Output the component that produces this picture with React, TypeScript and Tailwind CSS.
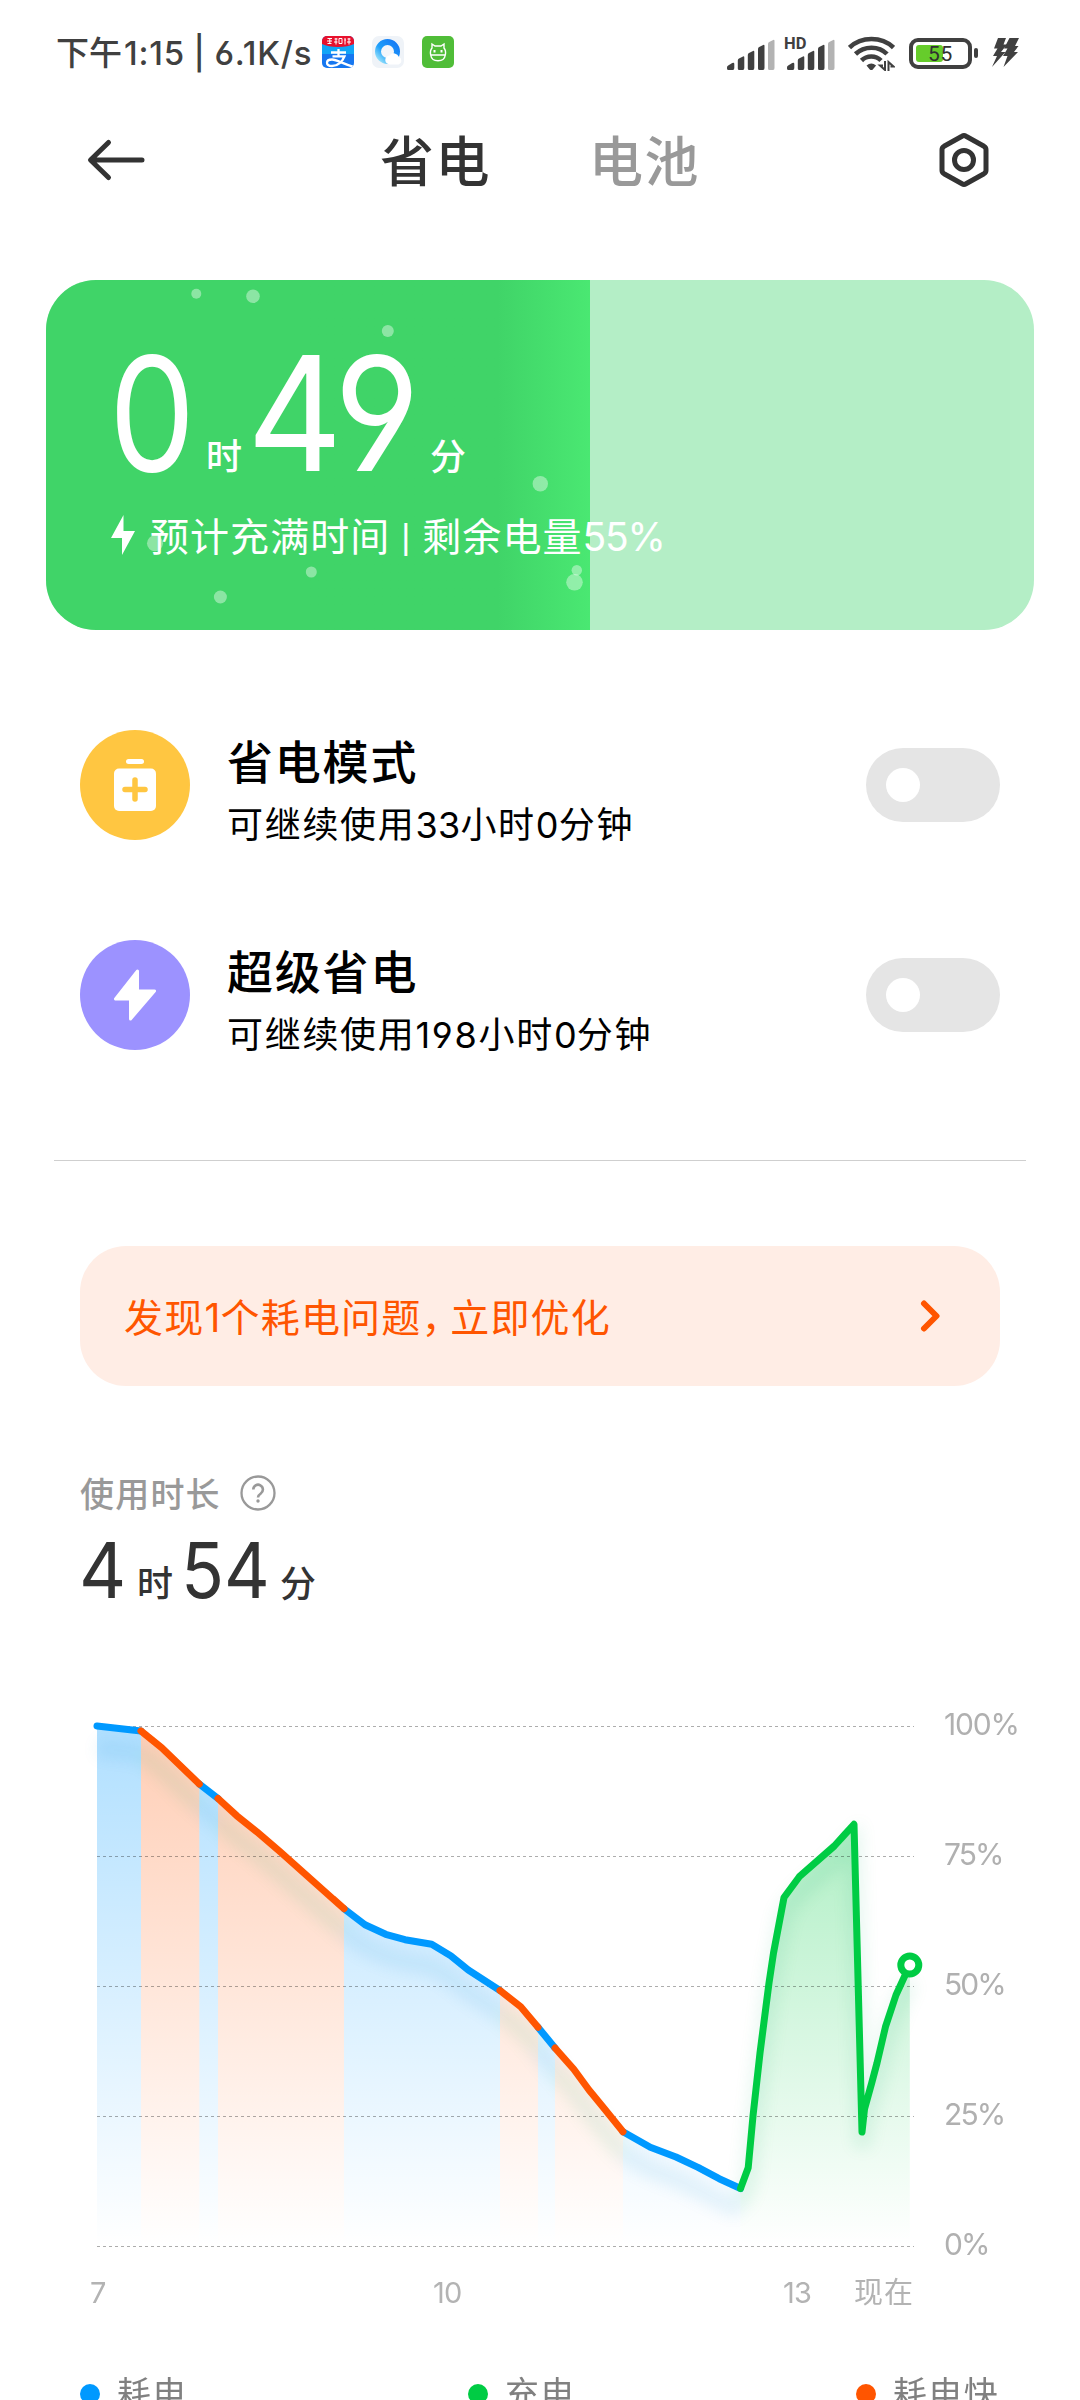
import type { ReactNode } from "react";

type Segment = { color: string; fill: string; points: [number, number][] };

const BLUE = "#0099ff";
const ORANGE = "#ff5500";
const GREEN = "#00cc44";
const BASE = 2246;

const segments: Segment[] = [
  { color: BLUE, fill: "url(#blueFill)", points: [[97, 1726], [141, 1731]] },
  { color: BLUE, fill: "url(#blueFill)", points: [[199.3, 1784], [218, 1798.5]] },
  {
    color: BLUE,
    fill: "url(#blueFill)",
    points: [[344, 1908.7], [365, 1924.7], [385.7, 1934.3], [405, 1939.7], [431.7, 1944.3], [450.7, 1955.7], [468.3, 1970], [500, 1990.5]],
  },
  { color: BLUE, fill: "url(#blueFill)", points: [[538, 2027.3], [555, 2048]] },
  {
    color: BLUE,
    fill: "url(#blueFill)",
    points: [[623, 2131.7], [650.3, 2147.3], [676, 2157], [698, 2167.3], [719.2, 2178.7], [740.5, 2188.5]],
  },
  { color: ORANGE, fill: "url(#orangeFill)", points: [[141, 1731], [161.7, 1747.7], [199.3, 1784]] },
  {
    color: ORANGE,
    fill: "url(#orangeFill)",
    points: [[218, 1798.5], [236.7, 1815.7], [256.7, 1831.7], [280, 1851.7], [344, 1908.7]],
  },
  { color: ORANGE, fill: "url(#orangeFill)", points: [[500, 1990.5], [520.7, 2006.7], [538, 2027.3]] },
  {
    color: ORANGE,
    fill: "url(#orangeFill)",
    points: [[555, 2048], [573.8, 2069.3], [589, 2090], [604.4, 2108.7], [623, 2131.7]],
  },
  {
    color: GREEN,
    fill: "url(#greenFill)",
    points: [
      [740.5, 2188.5], [748.2, 2167.7], [753, 2116], [760, 2053], [769, 1983], [773.5, 1953], [784, 1897.5], [799.3, 1876.7],
      [834.3, 1846], [854, 1824.3], [862, 2132], [864.5, 2109], [871.7, 2083], [877, 2063], [885.5, 2026.7], [896, 1995], [909.8, 1965],
    ],
  },
];

const bubbles = [
  [150.3, 13.7, 5], [207, 16.3, 6.8], [341.8, 51, 6], [494.3, 203.7, 7.7], [109, 263.3, 8],
  [265.3, 292, 5.5], [174.4, 317, 6.5], [528.5, 302.3, 8.3], [530.8, 290.3, 5.2],
];

const toPath = (points: [number, number][]) => points.map(([x, y]) => `${x},${y}`).join(" ");

function SignalBars() {
  return (
    <svg width="48" height="34" viewBox="0 0 48 34" fill="#404040">
      <path d="M0 31.500q0-1.500 1.200-2.100l4-2.300q2.100-1 2.100.8V32q0 2-1.500 2H1.500Q0 34 0 32.500z" />
      <path d="M10.800 24.500q0-1.500 1.200-2l4-2q1.300-.6 1.300 1V32q0 2-1.500 2h-3.500q-1.500 0-1.500-1.500z" />
      <path d="M20.800 19q0-1.500 1.200-2l4-2q1.300-.6 1.300 1v16q0 2-1.500 2h-3.500q-1.500 0-1.500-1.500z" />
      <path d="M31 13q0-1.500 1.200-2l4-2q1.300-.6 1.300 1v22q0 2-1.500 2h-3.500Q31 34 31 32.500z" />
      <path d="M41 8q0-1.500 1.200-2l4-2q1.300-.6 1.300 1v27q0 2-1.500 2h-3.500Q41 34 41 32.500z" fill="#b3b3b3" />
    </svg>
  );
}

/* Latin digits set inside Chinese text */
function Num({ className = "tracking-[0.2px]", children }: { className?: string; children: ReactNode }) {
  return <span className={`font-['Inter'] [font-feature-settings:'cv03','cv04'] ${className}`}>{children}</span>;
}

function StatusBar() {
  return (
    <div className="flex h-[106px] items-center pl-[56px] text-[#404040]">
      <span className="w-[266px] whitespace-nowrap pt-[1px] text-[33px] leading-[40px] font-medium">
        下午<Num className="ml-[2px] tracking-[0.800px] [word-spacing:-1px]">1:15 | 6.1K/s</Num>
      </span>
      <svg className="mt-[-2px]" width="32" height="32" viewBox="0 0 32 32">
        <defs>
          <clipPath id="payClip">
            <rect width="32" height="32" rx="5" />
          </clipPath>
        </defs>
        <g clipPath="url(#payClip)">
          <rect width="32" height="32" fill="#1677f0" />
          <rect y="8" width="32" height="10" fill="#12a5f7" />
          <path d="M0 0h32v8q-6 3-16 3T0 8z" fill="#e8112d" />
          <path
            d="M5.500 2.500h4.500M5 5h5M7.800 2v6M5.500 7.500h4M12.500 3h3M12 6h3.500M14 2v6.500M17 2.500h3v5h-3zM22.500 4h1.500M23 2v6.500M25.500 3h3M25 6h4M27 2v6.500"
            fill="none"
            stroke="#fff"
            strokeWidth="1"
          />
          <path
            d="M9 16.500h15M16.500 13v7M10.500 20.300h12c-2 5-6.500 9.700-12.500 9.700-3 0-5-1.200-5-3.300s2.300-3.200 5-3.200c5 0 11 4.500 22 7.500"
            fill="none"
            stroke="#fff"
            strokeWidth="2.300"
          />
        </g>
      </svg>
      <svg className="ml-[18px] mt-[-2px]" width="32" height="32" viewBox="0 0 32 32">
        <defs>
          <linearGradient id="ringFill" x1="1" y1="0" x2="0" y2="1">
            <stop offset="0" stopColor="#1678f5" />
            <stop offset=".6" stopColor="#1fa0fa" />
            <stop offset="1" stopColor="#9fe6fb" />
          </linearGradient>
        </defs>
        <rect width="32" height="32" rx="7" fill="#eff3f8" />
        <circle cx="15.500" cy="15.500" r="9.500" fill="#f4f6fa" stroke="url(#ringFill)" strokeWidth="6" />
        <path d="M18 28.500a4.500 4.500 0 0 1-.5-9 5.500 5.500 0 0 1 9.500 1.500 4 4 0 0 1-.5 7.500z" fill="#fff" />
      </svg>
      <svg className="ml-[18px] mt-[-2px]" width="32" height="32" viewBox="0 0 32 32" fill="none" stroke="#fff" strokeWidth="1.400">
        <rect width="32" height="32" rx="5" fill="#50bd38" stroke="none" />
        <path d="M10 12V8l3 2h6l3-2v4c1.800 2 1.800 4.500 1.300 7-.5 3.500-3.300 5.800-7.300 5.800s-6.800-2.300-7.300-5.800c-.5-2.500-.5-5 1.300-7zM8.500 19h15" />
        <path d="M12.500 14v2.500M19.500 14v2.500" strokeWidth="2" />
      </svg>

      <div className="ml-[273px] flex items-center">
        <SignalBars />
        <div className="relative ml-[12px] flex">
          <SignalBars />
          <span className="absolute top-[0px] left-[-3px] text-[16.500px] leading-[16px] font-bold">HD</span>
        </div>
        <svg className="ml-[13px]" width="47" height="36" viewBox="0 0 47 36" fill="none" stroke="#404040" strokeWidth="4.600">
          <path d="M1.500 12.500Q10.500 4 23.500 4t22 8.500" />
          <path d="M7.500 19Q14 12.700 23.500 12.700T39 19" />
          <path d="M13.500 25.500q4-4 9.800-4t9.700 4" />
          <path d="M18.500 30.500q4.800-4 9.600 0l-3.300 4q-1.500 1.200-3 0z" fill="#404040" stroke="none" />
          <path d="M37 26v9l-5-4.500h3M40.500 36v-9l5 4.500h-3" strokeWidth="2" />
        </svg>
        <div className="ml-[14px] flex items-center">
          <div className="relative flex h-[31px] w-[63px] items-center rounded-[9px] border-[4px] border-[#404040] pl-[3px]">
            <div className="h-[17px] w-[27px] rounded-[3px] bg-[#66cc2b]" />
            <span className="absolute top-[2px] left-[15px] font-['Roboto'] text-[21px] leading-[20px] tracking-[0.6px] text-[#303030]">
              55
            </span>
          </div>
          <div className="ml-[2px] h-[10px] w-[4px] rounded-[2px] bg-[#404040]" />
        </div>
        <svg className="ml-[14px]" width="28" height="30" viewBox="0 0 28 30" fill="#404040">
          <path d="M6 0h8l-2.500 6.500h3.500L9 14h4.500L0 29l5-11H1l4.500-7.500H2z" />
          <path d="M17.500 0H27l-4 8h3.500L22 14h4L11.500 29l4-11h-4.500l4.500-7.500H12z" />
        </svg>
      </div>
    </div>
  );
}

function Header() {
  return (
    <div className="flex h-[108px] items-center">
      <svg className="ml-[86px]" width="60" height="44" viewBox="0 0 60 44" fill="none" stroke="#333" strokeWidth="5" strokeLinecap="round" strokeLinejoin="round">
        <path d="M56 22H5M22.500 4.500 4.500 22l18 17.500" />
      </svg>
      <span className="ml-[234px] w-[209px] pt-[7px] text-[54px] leading-[64px] font-medium tracking-[1.500px] text-[#333]">省电</span>
      <span className="w-[349px] pt-[7px] text-[54px] leading-[64px] font-medium tracking-[1.500px] text-[#999]">电池</span>
      <svg width="52" height="56" viewBox="0 0 52 56" fill="none" stroke="#333" strokeWidth="5" strokeLinejoin="round">
        <path d="M24 4.200q2-1.200 4 0L46 14.300q2 1.200 2 3.400v20.600q0 2.200-2 3.400L28 51.800q-2 1.200-4 0L6 41.700q-2-1.200-2-3.400V17.700q0-2.200 2-3.400z" />
        <circle cx="26" cy="28" r="9.500" />
      </svg>
    </div>
  );
}

/* Narrowed numerals for the two big time readouts */
function BigDigits({ className, children }: { className: string; children: ReactNode }) {
  return (
    <span className={`inline-block origin-left font-['Inter'] [font-feature-settings:'cv03','cv04'] ${className}`}>
      {children}
    </span>
  );
}

function ChargeCard() {
  return (
    <div className="relative mx-[46px] mt-[66px] h-[350px] overflow-hidden rounded-[50px] bg-[#b4eec6] text-white">
      <div className="absolute inset-y-0 left-0 w-[544px] bg-linear-to-r from-[#40d468] from-83% to-[#4ae872]" />
      <svg className="absolute inset-0" width="988" height="350" fill="#fff" fillOpacity=".4">
        {bubbles.map(([x, y, r], i) => (
          <circle key={i} cx={x} cy={y} r={r} />
        ))}
      </svg>
      <div className="relative flex h-full flex-col pt-[53px] pl-[63px]">
        <div className="flex h-[160px] items-baseline leading-[160px]">
          <BigDigits className="w-[97px] scale-x-[0.86] text-[159px]">0</BigDigits>
          <span className="w-[41px] -translate-y-px text-[36px] font-medium">时</span>
          <BigDigits className="w-[183px] scale-x-[0.93] text-[159px] tracking-[-3px]">49</BigDigits>
          <span className="-translate-y-px text-[36px] font-medium">分</span>
        </div>
        <div className="mt-[17px] flex h-[50px] items-center">
          <svg width="28" height="40" viewBox="0 0 28 40" fill="#fff">
            <path d="M14.500 0 2 23h11v17L26 16H14.500z" />
          </svg>
          <span className="ml-[13px] pt-[5px] whitespace-nowrap text-[39px] leading-[50px] tracking-[1.050px]">
            预计充满时间 | 剩余电量<Num className="tracking-[-1.200px]">55%</Num>
          </span>
        </div>
      </div>
    </div>
  );
}

function ModeRow({ title, note, color, icon }: { title: string; note: ReactNode; color: string; icon: ReactNode }) {
  return (
    <div className="flex h-[210px] items-center pr-[80px] pl-[80px]">
      <div className={`flex size-[110px] items-center justify-center rounded-full ${color}`}>{icon}</div>
      <div className="ml-[37px] flex-1 pt-[18px] text-black">
        <div className="text-[46px] leading-[62px] font-medium tracking-[1.800px]">{title}</div>
        <div className="text-[36px] leading-[62px] tracking-[1.700px]">{note}</div>
      </div>
      <div className="flex h-[74px] w-[134px] items-center rounded-full bg-[#e5e5e5] pl-[20px]">
        <div className="size-[34px] rounded-full bg-white" />
      </div>
    </div>
  );
}

function Chart() {
  return (
    <div>
      <div className="flex h-[568px] items-start">
        <svg className="ml-[80px]" width="864" height="568" viewBox="80 1700 864 568">
          <defs>
            <linearGradient id="blueFill" gradientUnits="userSpaceOnUse" x1="0" y1="1726" x2="0" y2={BASE}>
              <stop offset="0" stopColor={BLUE} stopOpacity=".31" />
              <stop offset="1" stopColor={BLUE} stopOpacity="0" />
            </linearGradient>
            <linearGradient id="orangeFill" gradientUnits="userSpaceOnUse" x1="0" y1="1726" x2="0" y2={BASE}>
              <stop offset="0" stopColor={ORANGE} stopOpacity=".29" />
              <stop offset="1" stopColor={ORANGE} stopOpacity="0" />
            </linearGradient>
            <linearGradient id="greenFill" gradientUnits="userSpaceOnUse" x1="0" y1="1824" x2="0" y2={BASE}>
              <stop offset="0" stopColor={GREEN} stopOpacity=".31" />
              <stop offset="1" stopColor={GREEN} stopOpacity="0" />
            </linearGradient>
            <filter id="soft" filterUnits="userSpaceOnUse" x="80" y="1700" width="864" height="568">
              <feGaussianBlur stdDeviation="8" />
            </filter>
          </defs>
          {segments.map((s, i) => (
            <polygon
              key={i}
              fill={s.fill}
              points={`${s.points[0][0]},${BASE} ${toPath(s.points)} ${s.points[s.points.length - 1][0]},${BASE}`}
            />
          ))}
          <g filter="url(#soft)" fill="none" strokeWidth="16" opacity=".1">
            {segments.map((s, i) => (
              <polyline
                key={i}
                points={toPath(s.points)}
                transform={s.color === GREEN ? "translate(0 16)" : "translate(0 22)"}
                stroke={s.color === BLUE ? "#0088cc" : "#00aa66"}
              />
            ))}
          </g>
          <g stroke="#000" strokeOpacity=".32" strokeDasharray="3 3">
            {[1726.5, 1856.5, 1986.5, 2116.5, 2246.5].map((y) => (
              <line key={y} x1="97" x2="914" y1={y} y2={y} />
            ))}
          </g>
          <g fill="none" strokeWidth="7" strokeLinecap="round" strokeLinejoin="round">
            {segments.map((s, i) => (
              <polyline key={i} points={toPath(s.points)} stroke={s.color} />
            ))}
          </g>
          <circle cx="909.800" cy="1965" r="9" fill="#fff" stroke={GREEN} strokeWidth="7" />
        </svg>
        <div className="flex h-full flex-col justify-between font-['Inter'] text-[30px] leading-[48px] font-[370] tracking-[-1.900px] text-[#b0b0b0]">
          <span className="tracking-[-1.200px]">100%</span>
          {["75%", "50%", "25%", "0%"].map((t) => (
            <span key={t}>{t}</span>
          ))}
        </div>
      </div>
      <div className="flex h-[48px] pl-[90px] text-[29px] leading-[50px] text-[#b3b3b3]">
        <Num className="w-[343px] tracking-[-0.7px]">7</Num>
        <Num className="w-[350px] tracking-[-0.7px]">10</Num>
        <Num className="w-[71px] tracking-[-0.7px]">13</Num>
        <span className="tracking-[1px]">现在</span>
      </div>
    </div>
  );
}

function Legend() {
  return (
    <div className="mt-[54px] flex text-[34px] leading-[48px] tracking-[1.400px] text-[#808080]">
      <div className="ml-[80px] flex w-[388px] items-center gap-[17px]">
        <i className="size-[20px] rounded-full bg-[#0099ff]" />耗电
      </div>
      <div className="flex w-[388px] items-center gap-[17px]">
        <i className="size-[20px] rounded-full bg-[#00cc44]" />充电
      </div>
      <div className="flex items-center gap-[17px]">
        <i className="size-[20px] rounded-full bg-[#ff5500]" />耗电快
      </div>
    </div>
  );
}

export default function App() {
  return (
    <div className="h-[2400px] w-[1080px] overflow-hidden bg-white font-[Roboto,'Noto_Sans_CJK_SC',sans-serif]">
      <StatusBar />
      <Header />
      <ChargeCard />

      <div className="mt-[50px]">
        <ModeRow
          title="省电模式"
          note={<>可继续使用<Num>33</Num>小时<Num>0</Num>分钟</>}
          color="bg-[#ffc641]"
          icon={
            <svg width="42" height="54" viewBox="0 0 42 54">
              <rect x="12" y="1" width="18" height="5" rx="2.500" fill="#fff" />
              <rect y="10.500" width="42" height="42.500" rx="5" fill="#fff" />
              <path d="M21 22v19M11 31.500h20" stroke="#ffc641" strokeWidth="5.500" strokeLinecap="round" />
            </svg>
          }
        />
        <ModeRow
          title="超级省电"
          note={<>可继续使用<Num className="tracking-[1.700px]">198</Num>小时<Num>0</Num>分钟</>}
          color="bg-[#9c92ff]"
          icon={
            <svg width="44" height="54" viewBox="0 0 44 54" fill="#fff" stroke="#fff" strokeWidth="3" strokeLinejoin="round">
              <path d="M24.500 3 2.500 31h15v20L41.500 23h-17z" />
            </svg>
          }
        />
      </div>

      <div className="mx-[54px] mt-[60px] h-px bg-[#cfcfcf]" />

      <div className="mx-[80px] mt-[85px] flex h-[140px] items-center rounded-[46px] bg-[#ffede5] text-[#ff5500]">
        <span className="ml-[44px] flex-1 pt-[4px] text-[39px] leading-[60px] tracking-[1.200px]">
          发现<Num>1</Num>个耗电问题<span className="mr-[8px] [font-feature-settings:'halt']">，</span>立即优化
        </span>
        <svg className="mr-[60px]" width="20" height="32" viewBox="0 0 20 32" fill="none" stroke="#ff5500" strokeWidth="6" strokeLinecap="round" strokeLinejoin="round">
          <path d="M4 3.500 16.500 16 4 28.500" />
        </svg>
      </div>

      <div className="mt-[84px] flex h-[48px] items-center pl-[80px]">
        <span className="pt-[2px] text-[34px] leading-[48px] font-medium tracking-[1.200px] text-[#999]">使用时长</span>
        <svg className="ml-[19px] mt-[-2px]" width="36" height="36" viewBox="0 0 36 36" fill="none" stroke="#999" strokeWidth="2.300">
          <circle cx="18" cy="18" r="16.500" />
          <path d="M13.300 14.500a4.800 4.800 0 1 1 7.500 4c-1.800 1.200-2.800 2-2.800 4" strokeWidth="2.600" />
          <circle cx="18" cy="26" r="1.700" fill="#999" stroke="none" />
        </svg>
      </div>
      <div className="flex h-[100px] items-baseline pt-[2px] pl-[79px] leading-[100px] text-[#333]">
        <BigDigits className="w-[58px] scale-x-[0.95] text-[77px]">4</BigDigits>
        <span className="w-[44px] -translate-y-px text-[36px] font-medium">时</span>
        <BigDigits className="w-[99px] scale-x-[0.92] text-[77px]">54</BigDigits>
        <span className="-translate-y-px text-[36px] font-medium">分</span>
      </div>

      <div className="mt-[82px]">
        <Chart />
      </div>
      <Legend />
    </div>
  );
}
